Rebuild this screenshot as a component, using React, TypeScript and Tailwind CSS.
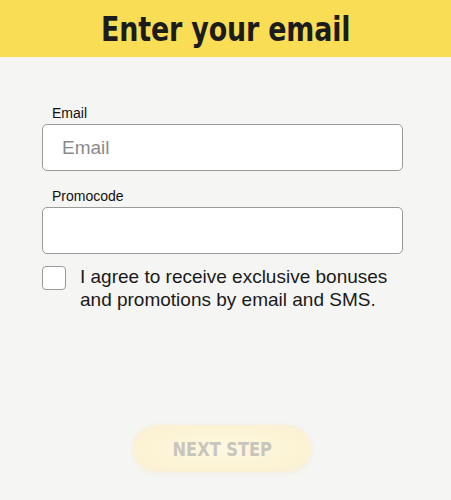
export default function App() {
  return (
    <div className="min-h-[500px] w-full bg-[#f5f5f3] font-['Liberation_Sans',Arial,sans-serif]">
      {/* Header band */}
      <div className="flex h-[57px] items-center justify-center bg-[#f9dd55]">
        <h1 className="inline-block [transform:scaleX(0.88)] font-['DejaVu_Sans',sans-serif] font-stretch-condensed text-[34px] font-bold leading-none tracking-[-0.2px] text-[#1c1c1c]">
          Enter your email
        </h1>
      </div>

      {/* Form */}
      <div className="px-[42px] pt-[48px]">
        <label className="block pl-[10px] text-[14px] leading-[16px] text-[#111]">Email</label>
        <input
          type="email"
          placeholder="Email"
          className="mt-[3px] block h-[47px] w-[361px] rounded-[5px] border border-[#9a9a9a] bg-white px-[19px] text-[19px] text-[#222] outline-none placeholder:text-[#8a8a8a]"
        />

        <label className="mt-[17px] block pl-[10px] text-[14px] leading-[16px] text-[#111]">Promocode</label>
        <input
          type="text"
          className="mt-[3px] block h-[47px] w-[361px] rounded-[5px] border border-[#9a9a9a] bg-white px-[19px] text-[19px] text-[#222] outline-none"
        />

        <div className="mt-[12px] flex items-start gap-[14px]">
          <div className="h-[24px] w-[24px] shrink-0 rounded-[4px] border border-[#9a9a9a] bg-white" />
          <p className="-mt-[1px] text-[19px] leading-[23px] text-[#1a1a1a]">
            I agree to receive exclusive bonuses
            <br />
            and promotions by email and SMS.
          </p>
        </div>
      </div>

      {/* Button */}
      <div className="flex pl-[133px] pt-[114px]">
        <button className="flex h-[47px] w-[178px] items-center justify-center rounded-full bg-[radial-gradient(ellipse_at_center,#fdf8e0_0%,#fcf3d4_65%,#f9eed8_100%)] shadow-[0_1px_5px_rgba(240,228,190,0.45)]">
          <span className="inline-block [transform:scaleX(0.9)] font-['DejaVu_Sans',sans-serif] font-stretch-condensed text-[20px] font-bold text-[#c8c5bc]">
            NEXT STEP
          </span>
        </button>
      </div>
    </div>
  );
}
